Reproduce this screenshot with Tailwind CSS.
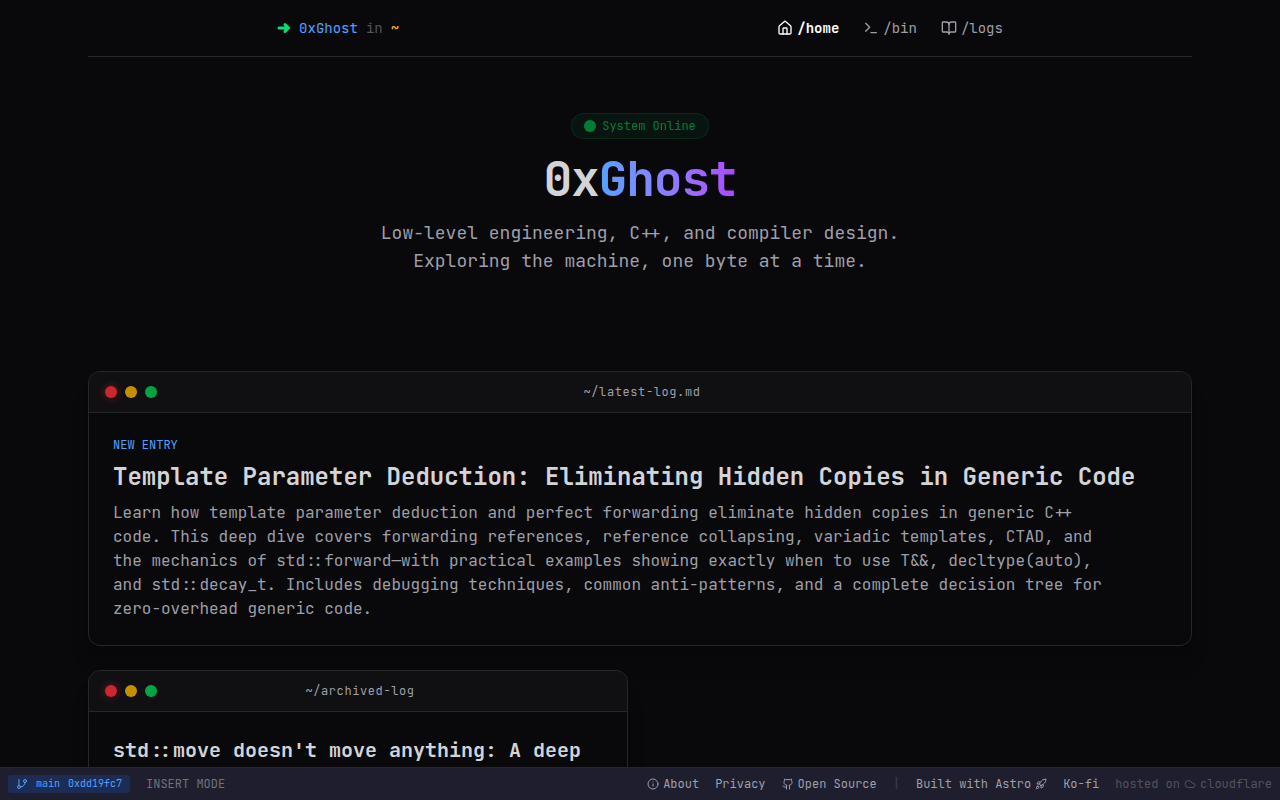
<!DOCTYPE html>
<html lang="en">
<head>
  <meta charset="UTF-8">
  <meta name="viewport" content="width=device-width, initial-scale=1.0">
  <title>0xGhost</title>
  <script src="https://cdn.jsdelivr.net/npm/@tailwindcss/browser@4"></script>
</head>
<body class="min-h-screen bg-[#09090b] text-zinc-300 font-['JetBrains_Mono','DejaVu_Sans_Mono',monospace]">
  <div class="max-w-6xl mx-auto px-6 pb-12">
    <header class="h-[57px] flex items-center justify-around border-b border-zinc-800 text-sm">
      <a href="#" class="flex items-center gap-2 text-blue-400">
        <svg class="w-3.5 h-3.5 text-[#05df72]" viewBox="0 0 14 14" fill="none" stroke="currentColor" stroke-width="3" stroke-linecap="round" stroke-linejoin="round"><path d="M2 7h9M8 3.5 11.5 7 8 10.5"/></svg>
        <span>0xGhost</span>
        <span class="text-zinc-600">in</span>
        <span class="text-[#fcc800]">~</span>
      </a>
      <nav class="flex items-center gap-6 text-zinc-400">
        <a href="#" class="flex items-center gap-1 font-bold text-white">
          <svg class="w-4 h-4" viewBox="0 0 24 24" fill="none" stroke="currentColor" stroke-width="2" stroke-linecap="round" stroke-linejoin="round"><path d="M15 21v-8a1 1 0 0 0-1-1h-4a1 1 0 0 0-1 1v8"/><path d="M3 10a2 2 0 0 1 .709-1.528l7-5.999a2 2 0 0 1 2.582 0l7 5.999A2 2 0 0 1 21 10v9a2 2 0 0 1-2 2H5a2 2 0 0 1-2-2z"/></svg>
          /home
        </a>
        <a href="#" class="flex items-center gap-1">
          <svg class="w-4 h-4" viewBox="0 0 24 24" fill="none" stroke="currentColor" stroke-width="2" stroke-linecap="round" stroke-linejoin="round"><path d="m4 17 6-6-6-6"/><path d="M12 19h8"/></svg>
          /bin
        </a>
        <a href="#" class="flex items-center gap-1">
          <svg class="w-4 h-4" viewBox="0 0 24 24" fill="none" stroke="currentColor" stroke-width="2" stroke-linecap="round" stroke-linejoin="round"><path d="M12 7v14"/><path d="M3 18a1 1 0 0 1-1-1V4a1 1 0 0 1 1-1h5a4 4 0 0 1 4 4 4 4 0 0 1 4-4h5a1 1 0 0 1 1 1v13a1 1 0 0 1-1 1h-6a3 3 0 0 0-3 3 3 3 0 0 0-3-3z"/></svg>
          /logs
        </a>
      </nav>
    </header>

    <main>
      <section class="flex flex-col items-center pt-14 pb-24 text-center">
        <div class="flex items-center gap-1.5 px-3 py-1 mb-4 rounded-full border border-green-500/20 bg-green-500/10 text-xs text-green-500 opacity-60">
          <span class="w-3 h-3 rounded-full bg-green-500"></span>
          System Online
        </div>
        <h1 class="mb-4 text-5xl leading-none font-bold tracking-tight">0x<span class="bg-linear-to-r from-[#51a2ff] to-[#ad46ff] bg-clip-text text-transparent">Ghost</span></h1>
        <p class="max-w-xl text-lg leading-7 text-zinc-400">Low-level engineering, C++, and compiler design. Exploring the machine, one byte at a time.</p>
      </section>

      <section class="grid grid-cols-2 gap-6">
        <article class="col-span-2 rounded-xl border border-zinc-800 shadow-xl overflow-hidden">
          <div class="flex items-center justify-between h-[41px] px-4 border-b border-zinc-800 bg-zinc-900/50">
            <div class="flex gap-2">
              <span class="w-3 h-3 rounded-full bg-red-500/80 shadow-[0_0_8px] shadow-red-500/40"></span>
              <span class="w-3 h-3 rounded-full bg-yellow-500/80"></span>
              <span class="w-3 h-3 rounded-full bg-green-500/80"></span>
            </div>
            <span class="text-xs tracking-wider text-zinc-400">~/latest-log.md</span>
            <div class="w-12"></div>
          </div>
          <div class="p-6">
            <p class="mb-2 text-xs text-blue-400">NEW ENTRY</p>
            <h2 class="mb-2 text-2xl leading-8 font-bold">Template Parameter Deduction: Eliminating Hidden Copies in Generic Code</h2>
            <p class="max-w-[1000px] text-base leading-6 text-zinc-400">Learn how template parameter deduction and perfect forwarding eliminate hidden copies in generic C++ code. This deep dive covers forwarding references, reference collapsing, variadic templates, CTAD, and the mechanics of std::forward—with practical examples showing exactly when to use T&amp;&amp;, decltype(auto), and std::decay_t. Includes debugging techniques, common anti-patterns, and a complete decision tree for zero-overhead generic code.</p>
          </div>
        </article>

        <article class="rounded-xl border border-zinc-800 shadow-xl overflow-hidden">
          <div class="flex items-center justify-between h-[41px] px-4 border-b border-zinc-800 bg-zinc-900/50">
            <div class="flex gap-2">
              <span class="w-3 h-3 rounded-full bg-red-500/80 shadow-[0_0_8px] shadow-red-500/40"></span>
              <span class="w-3 h-3 rounded-full bg-yellow-500/80"></span>
              <span class="w-3 h-3 rounded-full bg-green-500/80"></span>
            </div>
            <span class="text-xs tracking-wider text-zinc-400">~/archived-log</span>
            <div class="w-12"></div>
          </div>
          <div class="p-6">
            <h2 class="text-xl leading-7 font-bold">std::move doesn't move anything: A deep</h2>
          </div>
        </article>
      </section>
    </main>
  </div>

  <footer class="fixed inset-x-0 bottom-0 h-[33px] flex items-center justify-between px-2 border-t border-zinc-800 bg-[#1e1e2e] text-xs text-zinc-400">
    <div class="flex items-center gap-4">
      <span class="flex items-center gap-2 h-[18px] px-2 rounded-xs bg-[#1c2c55] text-[10px] text-blue-400">
        <svg class="w-3 h-3" viewBox="0 0 24 24" fill="none" stroke="currentColor" stroke-width="2" stroke-linecap="round" stroke-linejoin="round"><path d="M6 3v12"/><circle cx="18" cy="6" r="3"/><circle cx="6" cy="18" r="3"/><path d="M18 9a9 9 0 0 1-9 9"/></svg>
        <span>main</span>
        <span>0xdd19fc7</span>
      </span>
      <span class="text-zinc-500">INSERT MODE</span>
    </div>
    <div class="flex items-center gap-4">
      <a href="#" class="flex items-center gap-1">
        <svg class="w-3 h-3" viewBox="0 0 24 24" fill="none" stroke="currentColor" stroke-width="2" stroke-linecap="round" stroke-linejoin="round"><circle cx="12" cy="12" r="10"/><path d="M12 16v-4M12 8h.01"/></svg>
        About
      </a>
      <a href="#">Privacy</a>
      <a href="#" class="flex items-center gap-1">
        <svg class="w-3 h-3" viewBox="0 0 24 24" fill="none" stroke="currentColor" stroke-width="2" stroke-linecap="round" stroke-linejoin="round"><path d="M15 22v-4a4.8 4.8 0 0 0-1-3.5c3 0 6-2 6-5.5.08-1.25-.27-2.48-1-3.5.28-1.15.28-2.35 0-3.5 0 0-1 0-3 1.5-2.64-.5-5.36-.5-8 0C6 2 5 2 5 2c-.3 1.15-.3 2.35 0 3.5A5.403 5.403 0 0 0 4 9c0 3.5 3 5.5 6 5.5-.39.49-.68 1.05-.85 1.65-.17.6-.22 1.23-.15 1.85v4"/><path d="M9 18c-4.51 2-5-2-7-2"/></svg>
        Open Source
      </a>
      <span class="text-zinc-700">|</span>
      <a href="#" class="flex items-center gap-1">
        Built with Astro
        <svg class="w-3 h-3" viewBox="0 0 24 24" fill="none" stroke="currentColor" stroke-width="2" stroke-linecap="round" stroke-linejoin="round"><path d="M4.5 16.5c-1.5 1.26-2 5-2 5s3.74-.5 5-2c.71-.84.7-2.13-.09-2.91a2.18 2.18 0 0 0-2.91-.09z"/><path d="m12 15-3-3a22 22 0 0 1 2-3.95A12.88 12.88 0 0 1 22 2c0 2.72-.78 7.5-6 11a22.35 22.35 0 0 1-4 2z"/><path d="M9 12H4s.55-3.03 2-4c1.62-1.08 5 0 5 0"/><path d="M12 15v5s3.03-.55 4-2c1.08-1.62 0-5 0-5"/></svg>
      </a>
      <a href="#">Ko-fi</a>
      <span class="flex items-center gap-1 text-zinc-600">
        hosted on
        <svg class="w-3 h-3" viewBox="0 0 24 24" fill="none" stroke="currentColor" stroke-width="2" stroke-linecap="round" stroke-linejoin="round"><path d="M17.5 19H9a7 7 0 1 1 6.71-9h1.79a4.5 4.5 0 1 1 0 9Z"/></svg>
        cloudflare
      </span>
    </div>
  </footer>
</body>
</html>
